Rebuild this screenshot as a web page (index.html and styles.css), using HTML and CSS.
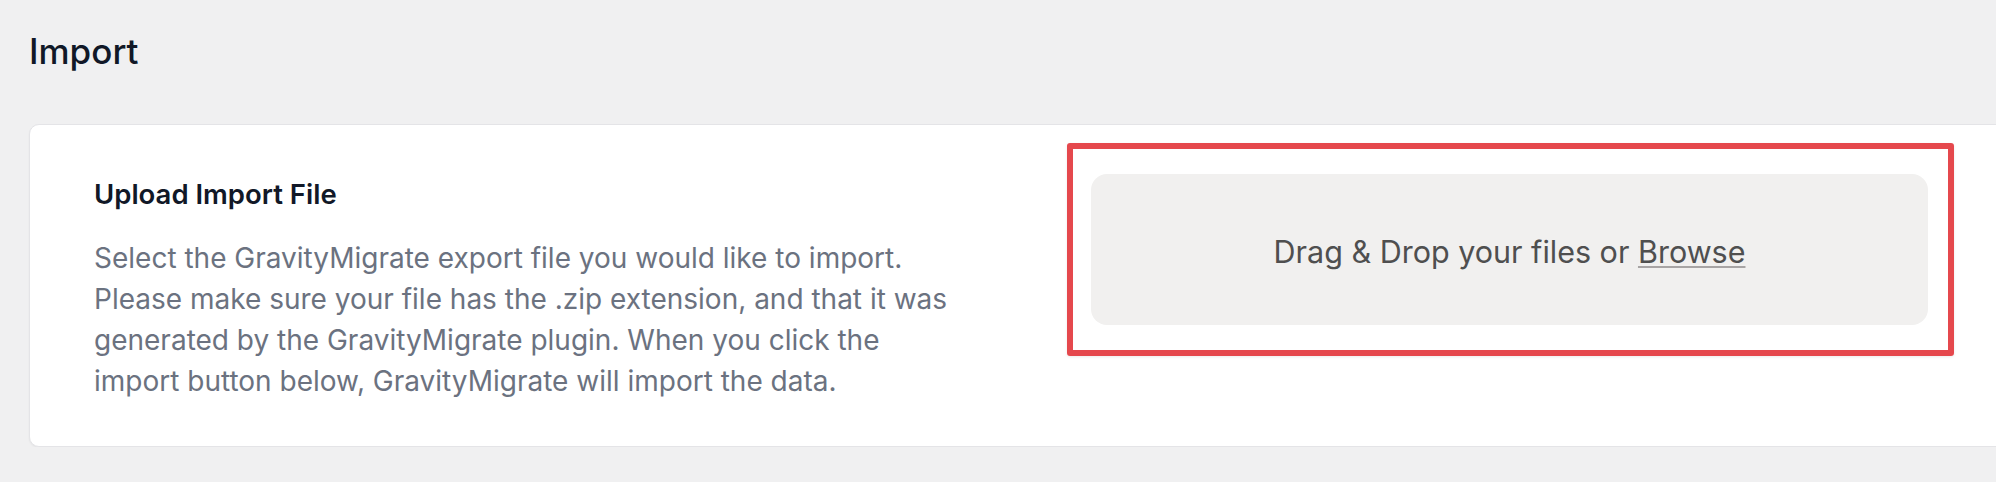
FILE: index.html
```html
<!DOCTYPE html>
<html lang="en">
<head>
<meta charset="utf-8">
<title>Import</title>
<link rel="stylesheet" href="styles.css">
</head>
<body>
<div class="page">
  <h1 class="page-title">Import</h1>
  <section class="card">
    <div class="intro">
      <h2 class="intro-title">Upload Import File</h2>
      <p class="intro-text">Select the GravityMigrate export file you would like to import.<br>
      Please make sure your file has the .zip extension, and that it was<br>
      generated by the GravityMigrate plugin. When you click the<br>
      import button below, GravityMigrate will import the data.</p>
    </div>
    <div class="highlight">
      <div class="dropzone">
        <span class="drop-label">Drag &amp; Drop your files or <span class="browse">Browse</span></span>
      </div>
    </div>
  </section>
</div>
</body>
</html>
```

FILE: styles.css
```css
html, body {
  margin: 0;
  padding: 0;
  background: #f0f0f1;
  overflow: hidden;
}

body {
  font-family: Inter, "Noto Sans", "Liberation Sans", sans-serif;
}

.page {
  padding: 29px 0 0 29px;
  width: 2100px;
}

.page-title {
  margin: 0;
  font-size: 35px;
  line-height: 44px;
  font-weight: 500;
  color: #111827;
}

.card {
  margin-top: 51px;
  height: 321px;
  box-sizing: content-box;
  background: #fff;
  border: 1px solid #e4e4e7;
  border-radius: 10px;
  box-shadow: 0 1px 2px rgba(0, 0, 0, 0.05);
  display: grid;
  grid-template-columns: 908px 887px;
  gap: 65px;
  align-items: start;
  padding-left: 64px;
}

.intro {
  padding-top: 49px;
}

.intro-title {
  margin: 0;
  font-size: 27.5px;
  line-height: 40px;
  font-weight: 600;
  color: #111827;
}

.intro-text {
  margin: 24px 0 0;
  font-size: 28px;
  line-height: 41px;
  color: #6b7280;
  white-space: nowrap;
}

.highlight {
  margin-top: 18px;
  border: 6px solid #e5484d;
  border-radius: 3px;
  padding: 25px 20px 25px 18px;
  box-shadow: 0 1px 3px rgba(0, 0, 0, 0.08);
}

.dropzone {
  height: 151px;
  box-sizing: border-box;
  padding-top: 3px;
  background: #f1f0ef;
  border-radius: 16px;
  display: flex;
  align-items: center;
  justify-content: center;
}

.drop-label {
  font-size: 30.5px;
  color: #4f4f4f;
}

.browse {
  text-decoration: underline;
  text-decoration-color: #a7a4a4;
  text-decoration-thickness: 2px;
  text-underline-offset: 3px;
}
```
